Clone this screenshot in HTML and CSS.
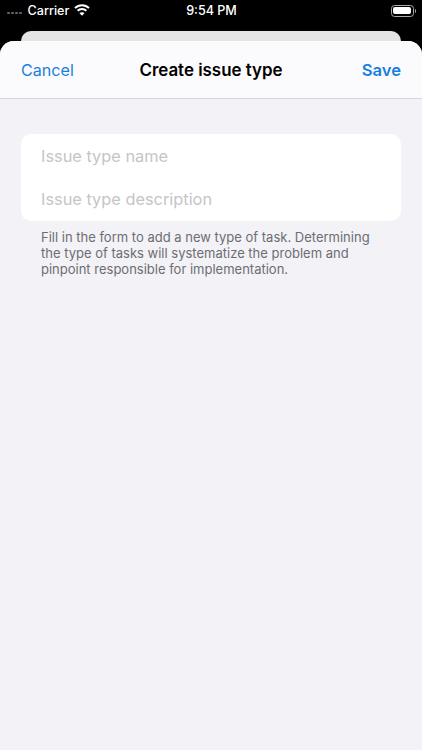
FILE: index.html
```html
<!DOCTYPE html>
<html lang="en">
<head>
<meta charset="utf-8">
<title>Create issue type</title>
<link rel="stylesheet" href="styles.css">
</head>
<body>
<div class="screen">
  <header class="status">
    <div class="status-left">
      <span class="dots"><i></i><i></i><i></i><i></i></span>
      <span class="carrier">Carrier</span>
      <svg class="wifi" viewBox="0 0 16 12" width="16" height="12" aria-hidden="true">
        <path fill="none" stroke="#fff" stroke-width="2" d="M1 4.100C4.900.2 11.100.2 15 4.100"/>
        <path fill="none" stroke="#fff" stroke-width="2" d="M3.600 6.800c2.400-2.400 6.400-2.400 8.800 0"/>
        <path fill="#fff" d="M5.400 9.100c1.500-1.300 3.700-1.300 5.200 0L8 11.800z"/>
      </svg>
    </div>
    <span class="time">9:54 PM</span>
    <div class="status-right">
      <span class="battery"><span class="level"></span></span>
      <span class="nub"></span>
    </div>
  </header>
  <div class="back-card"></div>
  <section class="sheet">
    <nav class="nav">
      <span class="action">Cancel</span>
      <span class="title">Create issue type</span>
      <span class="action save">Save</span>
    </nav>
    <main class="content">
      <div class="form">
        <div class="field">Issue type name</div>
        <div class="field">Issue type description</div>
      </div>
      <p class="hint">Fill in the form to add a new type of task. Determining the type of tasks will systematize the problem and pinpoint responsible for implementation.</p>
    </main>
  </section>
</div>
</body>
</html>
```
FILE: styles.css
```css
* { box-sizing: border-box; }
html, body { margin: 0; height: 100%; }
body { background: #000; font-family: Inter, "Liberation Sans", sans-serif; overflow: hidden; }
.screen { width: 422px; height: 750px; display: flex; flex-direction: column; background: #000; }
.status { height: 31px; flex: none; display: grid; grid-template-columns: 1fr auto 1fr; align-items: center; padding: 0 6px 10px 7px; color: #fff; font-size: 12.600px; font-weight: 500; line-height: 21px; }
.status-left { display: flex; align-items: center; }
.dots { display: flex; gap: 1.500px; margin-top: 5px; margin-right: 6px; }
.dots i { width: 2.500px; height: 2.500px; border-radius: 50%; background: #666; }
.carrier { margin-right: 5px; }
.wifi { display: block; margin-top: -2px; }
.status-right { display: flex; align-items: center; justify-content: flex-end; }
.battery { width: 23px; height: 12px; border: 1px solid #aaa; border-radius: 3.500px; padding: 1.500px; display: block; }
.level { display: block; height: 100%; background: #fff; border-radius: 2px; }
.nub { width: 1.500px; height: 4px; background: #999; border-radius: 0 1px 1px 0; margin-left: 1px; }
.back-card { height: 14px; flex: none; margin: 0 21px -4px; background: #e4e4e4; border-radius: 10px 10px 0 0; }
.sheet { flex: 1; position: relative; display: flex; flex-direction: column; background: #f2f2f7; border-radius: 14px 14px 0 0; overflow: hidden; }
.nav { height: 58px; flex: none; display: grid; grid-template-columns: 1fr auto 1fr; align-items: center; padding: 0 21px; background: #fbfbfd; border-bottom: 1px solid #d6d6da; }
.action { font-size: 16.100px; color: #1a7fe0; line-height: 22px; }
.save { font-size: 16.600px; font-weight: 600; text-align: right; }
.title { font-size: 16.900px; font-weight: 600; color: #000; line-height: 22px; }
.content { padding: 35px 21px 0; }
.form { background: #fff; border-radius: 10px; height: 87px; padding: 0 20px; display: flex; flex-direction: column; }
.field { height: 43.500px; display: flex; align-items: center; font-size: 16.350px; color: #c5c5c8; }
.hint { margin: 8px 20px 0; font-size: 13px; line-height: 16px; color: #6d6d72; }
```
